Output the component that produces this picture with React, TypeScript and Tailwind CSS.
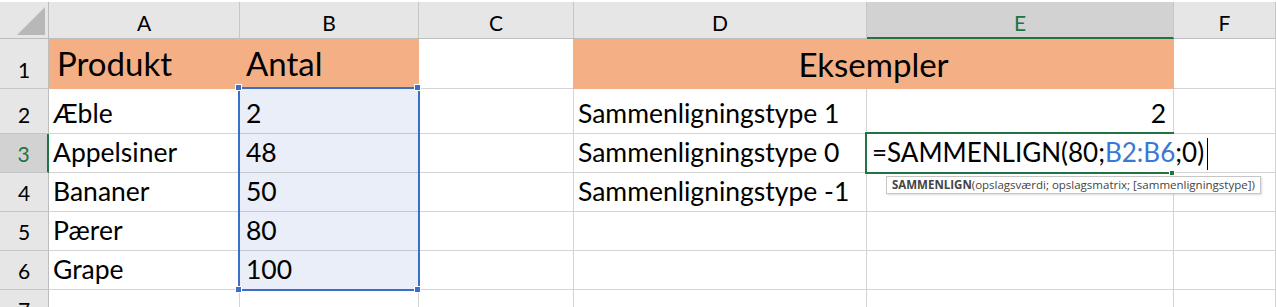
import React from 'react';

const cols = ['A', 'B', 'C', 'D', 'E', 'F'];
const font = { fontFamily: 'Lato, "Open Sans", sans-serif' };

function ColHeader({ label, active }: { label: string; active?: boolean }) {
  return (
    <div
      className={
        active
          ? 'flex items-end justify-center pb-[4px] bg-[#d2d2d2] border-r border-r-[#c6c6c6] border-b-2 border-b-[#217346] text-[#217346] text-[21px] leading-none'
          : 'flex items-end justify-center pb-[5px] bg-[#e6e6e6] border-r border-r-[#c6c6c6] border-b border-b-[#bdbdbd] text-black text-[21px] leading-none'
      }
    >
      {label}
    </div>
  );
}

function RowHeader({ n, active }: { n: number; active?: boolean }) {
  return (
    <div
      className={
        active
          ? 'flex items-end justify-center pb-[8px] bg-[#d2d2d2] border-r-2 border-r-[#217346] border-b border-b-[#c6c6c6] text-[#217346] text-[21px] leading-none'
          : 'flex items-end justify-center pb-[8px] bg-[#e6e6e6] border-r border-r-[#bdbdbd] border-b border-b-[#c6c6c6] text-black text-[21px] leading-none'
      }
    >
      {n}
    </div>
  );
}

function Cell({
  children,
  className = '',
}: {
  children?: React.ReactNode;
  className?: string;
}) {
  return (
    <div
      className={
        'flex items-end whitespace-nowrap border-r border-b border-[#d4d4d4] text-[26.5px] leading-none text-black pb-[7px] ' +
        className
      }
    >
      {children}
    </div>
  );
}

export default function App() {
  const data: [string, string][] = [
    ['Æble', '2'],
    ['Appelsiner', '48'],
    ['Bananer', '50'],
    ['Pærer', '80'],
    ['Grape', '100'],
  ];
  const examples = ['Sammenligningstype 1', 'Sammenligningstype 0', 'Sammenligningstype -1', '', ''];

  return (
    <div className="relative w-[1276px] h-[307px] overflow-hidden bg-white pt-[2px]" style={font}>
      <div className="grid grid-cols-[49px_191px_179px_155px_293px_307px_1fr] grid-rows-[37px_50px_45px_39px_39px_39px_39px_39px]">
        {/* header row */}
        <div className="relative bg-[#e6e6e6] border-r border-r-[#bdbdbd] border-b border-b-[#bdbdbd]">
          <svg className="absolute left-0 top-0" width="48" height="36" viewBox="0 0 48 36">
            <polygon points="45,5 45,33 17,33" fill="#b8b8b8" />
          </svg>
        </div>
        {cols.map((c) => (
          <ColHeader key={c} label={c} active={c === 'E'} />
        ))}

        {/* row 1 */}
        <RowHeader n={1} />
        <Cell className="bg-[#f4b084] border-[#f4b084] text-[33px] pl-[8px] pb-[8px]">Produkt</Cell>
        <Cell className="bg-[#f4b084] border-[#f4b084] text-[33px] pl-[6px] pb-[8px]">Antal</Cell>
        <Cell />
        <div className="col-span-2 flex items-end justify-center bg-[#f4b084] text-[33px] leading-none pb-[8px] -ml-px">
          Eksempler
        </div>
        <Cell />

        {/* rows 2-6 */}
        {data.map(([name, qty], i) => (
          <React.Fragment key={name}>
            <RowHeader n={i + 2} active={i === 1} />
            <Cell className="pl-[4px]">{name}</Cell>
            <Cell className="bg-[#e9eef8] border-b-[#c3c6cc] pl-[6px]">{qty}</Cell>
            <Cell />
            <Cell className="pl-[4px]">{examples[i]}</Cell>
            {i === 0 ? (
              <Cell className="justify-end pr-[7px]">2</Cell>
            ) : i === 1 ? (
              <Cell className="relative z-10 border-r-transparent pl-[5px] text-[26px]">
                =SAMMENLIGN(80;<span className="text-[#3a78d8]">B2:B6</span>;0)
                <span className="shrink-0 ml-[3px] inline-block w-px h-[32px] bg-black -mb-[5px]" />
              </Cell>
            ) : (
              <Cell />
            )}
            <Cell />
          </React.Fragment>
        ))}

        {/* row 7 */}
        <RowHeader n={7} />
        {cols.map((c) => (
          <Cell key={c} />
        ))}
      </div>

      {/* selection B2:B6 */}
      <div className="absolute left-[238px] top-[87px] w-[182px] h-[204px] border-2 border-[#3b6fc7] pointer-events-none" />
      {[
        'left-[235px] top-[84px]',
        'left-[414px] top-[84px]',
        'left-[235px] top-[286px]',
        'left-[414px] top-[286px]',
      ].map((pos) => (
        <div key={pos} className={'absolute w-[7px] h-[7px] bg-[#3b6fc7] border border-white ' + pos} />
      ))}

      {/* active cell E3 */}
      <div className="absolute left-[865px] top-[132px] w-[309px] h-[42px] border-t-2 border-l-2 border-b-2 border-[#217346] z-20 pointer-events-none" />
      <div className="absolute left-[1169px] top-[170px] w-[6px] h-[6px] bg-[#217346] border border-white z-20" />

      {/* function tooltip */}
      <div
        className="absolute left-[886px] top-[176px] h-[18px] px-[5px] flex items-center bg-white border border-[#c6c6c6] shadow-[1px_1px_2px_rgba(0,0,0,0.15)] text-[11.5px] text-[#444] whitespace-nowrap z-30"
        style={{ fontFamily: '"Open Sans", "Noto Sans", sans-serif' }}
      >
        <span className="font-bold">SAMMENLIGN</span>(opslagsværdi; opslagsmatrix; [sammenligningstype])
      </div>
    </div>
  );
}
